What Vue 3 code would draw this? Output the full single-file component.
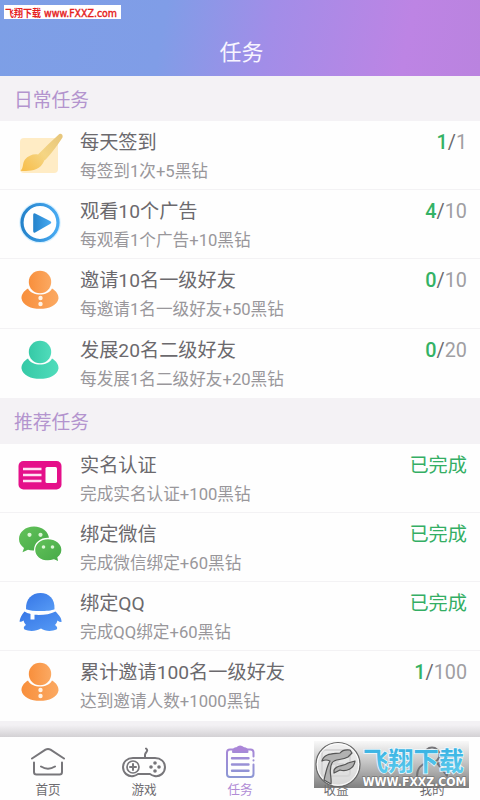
<script setup>
const sections = [
  {
    title: '日常任务',
    tasks: [
      { icon: 'brush', title: '每天签到', detail: '每签到1次+5黑钻', now: 1, total: 1 },
      { icon: 'play', title: '观看10个广告', detail: '每观看1个广告+10黑钻', now: 4, total: 10 },
      { icon: 'orange', title: '邀请10名一级好友', detail: '每邀请1名一级好友+50黑钻', now: 0, total: 10 },
      { icon: 'teal', title: '发展20名二级好友', detail: '每发展1名二级好友+20黑钻', now: 0, total: 20 }
    ]
  },
  {
    title: '推荐任务',
    tasks: [
      { icon: 'card', title: '实名认证', detail: '完成实名认证+100黑钻', done: true },
      { icon: 'wechat', title: '绑定微信', detail: '完成微信绑定+60黑钻', done: true },
      { icon: 'qq', title: '绑定QQ', detail: '完成QQ绑定+60黑钻', done: true },
      { icon: 'orange', title: '累计邀请100名一级好友', detail: '达到邀请人数+1000黑钻', now: 1, total: 100 }
    ]
  }
]
const tabs = [
  { id: 'home', label: '首页' },
  { id: 'game', label: '游戏' },
  { id: 'task', label: '任务' },
  { id: 'income', label: '收益' },
  { id: 'me', label: '我的' }
]
</script>

<template>
  <div class="screen">
    <svg class="defs" width="0" height="0">
      <defs>
        <linearGradient id="gOrange"><stop offset="0" stop-color="#f88f3c" /><stop offset="1" stop-color="#fba962" /></linearGradient>
        <linearGradient id="gTeal"><stop offset="0" stop-color="#35c9a6" /><stop offset="1" stop-color="#50dcbb" /></linearGradient>
        <linearGradient id="gBlue"><stop offset="0" stop-color="#2583cb" /><stop offset="1" stop-color="#47aaf2" /></linearGradient>
        <linearGradient id="gQQ" x2="1" y2="1"><stop offset="0" stop-color="#3676e6" /><stop offset="1" stop-color="#579bf5" /></linearGradient>
        <linearGradient id="gGreen" x2="1" y2="1"><stop offset="0" stop-color="#63c25a" /><stop offset="1" stop-color="#45a947" /></linearGradient>
        <linearGradient id="gBrush" gradientUnits="userSpaceOnUse" x1="46" y1="5" x2="6" y2="42"><stop offset="0" stop-color="#e6c67c" /><stop offset=".5" stop-color="#f5d583" /><stop offset="1" stop-color="#f8bd48" /></linearGradient>
        <linearGradient id="gTask" gradientUnits="userSpaceOnUse" x1="0" y1="0" x2="0" y2="36"><stop offset="0" stop-color="#ad85d8" /><stop offset="1" stop-color="#8998d4" /></linearGradient>
      </defs>
    </svg>

    <header class="header"><h1>任务</h1></header>

    <section v-for="s in sections" :key="s.title">
      <h2>{{ s.title }}</h2>
      <div v-for="t in s.tasks" :key="t.title" class="row">
        <svg class="icon" width="48" height="48" viewBox="0 0 48 48">
          <g v-if="t.icon === 'brush'">
            <rect x="4" y="9" width="38" height="35" rx="4" fill="#ffecc5" />
            <path d="M42.5 5.8C44 3.600 47.600 5.400 46.500 8.400C41 17 34 26 28.500 31.500L22 25.500C28 19.500 36 11.500 42.500 5.800Z" fill="url(#gBrush)" />
            <path d="M22 25.500Q27.500 27.500 28.200 31.800C24 42.500 12 42.500 4.500 41.700C8 38.500 6 34.500 9 30.500C12 26.500 18 24.500 22 25.500Z" fill="url(#gBrush)" />
          </g>
          <g v-else-if="t.icon === 'play'">
            <circle cx="24" cy="24.500" r="18" fill="#fff" stroke="#d9f1ff" stroke-width="5.500" />
            <circle cx="24" cy="24.500" r="18" fill="#fff" stroke="url(#gBlue)" stroke-width="3.200" />
            <path d="M17.200 17Q17.200 14.500 19.200 15.500L34 23Q36.500 24.500 34 26L19.200 34.500Q17.200 35.500 17.200 33Z" fill="url(#gBlue)" />
          </g>
          <g v-else-if="t.icon === 'orange' || t.icon === 'teal'" :fill="t.icon === 'teal' ? 'url(#gTeal)' : 'url(#gOrange)'">
            <circle cx="24" cy="15" r="11.200" />
            <path d="M12 21.500C16 29.500 32 29.500 36 21.500C40.500 24 42.800 28 42.500 31.500C41.300 38.500 33 41.800 24 41.800S6.700 38.500 5.500 31.500C5.200 28 7.500 24 12 21.500Z" />
            <g v-if="t.icon === 'orange'" fill="#fff3e6"><circle cx="24.500" cy="31" r="2.200" /><circle cx="24.500" cy="37" r="2.200" /></g>
          </g>
          <g v-else-if="t.icon === 'card'">
            <rect x="2.500" y="9" width="43" height="28.500" rx="5" fill="#e5108a" />
            <path d="M7 17H25.500M7 23H25.500M7 29H25.500" stroke="#ffe0f2" stroke-width="2.400" />
            <rect x="29.500" y="15" width="11.500" height="16" rx="1.500" fill="#fff" />
          </g>
          <g v-else-if="t.icon === 'wechat'">
            <path d="M18 5.500C9.500 5.500 3 11 3 18C3 22 4.800 24.500 8 27L6.500 31.200L12 28.800C14 29.500 16 29.800 19 29.500L33 18C33 10.500 26 5.500 18 5.500Z" fill="url(#gGreen)" />
            <path d="M32 17.500C24.500 17.500 18.600 22.500 18.600 29S24.500 40 32 40C34 40 36 39.600 38 38.900L43 41L42 36.500C44.500 34.500 46 32 46 29C46 22.500 39.500 17.500 32 17.500Z" fill="url(#gGreen)" stroke="#fff" stroke-width="1.300" />
            <g fill="#dcf6d6"><circle cx="13.500" cy="13.800" r="2.100" /><circle cx="24.500" cy="13.800" r="2.100" /><circle cx="27.500" cy="26" r="1.800" /><circle cx="36.500" cy="26" r="1.800" /></g>
          </g>
          <g v-else fill="url(#gQQ)">
            <path d="M10 19.200C9.500 9 16 3 24.500 3S39 9 38.500 19.200C33 21.700 16 21.700 10 19.200Z" />
            <path d="M8.500 21.500C11 23 13 23.500 14.500 24V29.500H18.500V24.800C26 25.300 34 24.500 39.500 21.500C43 25 46 28.500 45.500 32Q44 32.500 41.500 30.500Q41 33 39 35Q42.500 37.500 40.500 39.500C36 41.500 29 41.500 25 38.500C20 41.500 13 41.500 8.500 39.500Q6.500 37 10 35Q8 33 7.500 30.500Q5 32.500 3.500 31.500C4 28 5.500 25 8.500 21.500Z" />
          </g>
        </svg>
        <div class="text"><h3>{{ t.title }}</h3><p>{{ t.detail }}</p></div>
        <div v-if="t.done" class="status done">已完成</div>
        <div v-else class="status"><b>{{ t.now }}</b>/<span>{{ t.total }}</span></div>
      </div>
    </section>

    <div class="shade"></div>

    <nav class="tabs">
      <div v-for="t in tabs" :key="t.id" class="tab" :class="{ active: t.id === 'task' }">
        <svg width="44" height="36" viewBox="0 0 44 36" fill="none" stroke="#77767a" stroke-width="2" stroke-linecap="round" stroke-linejoin="round">
          <path v-if="t.id === 'home'" d="M6 14.500L19.500 5.700Q22 4.300 24.500 5.700L38 14.500M8 18.500V28Q8 30.500 10.500 30.500H33.500Q36 30.500 36 28V18.500M15 22.500Q22 27 29 22.500" />
          <g v-else-if="t.id === 'game'">
            <path d="M23 14V11Q23 9.500 24.500 8Q26 6 24 4.500M11 14H33C39 14 43 18 43 23C43 29 38 33 32.500 32Q30 31.500 28 30H16Q14 31.500 11.500 32C6 33 1 29 1 23C1 18 5 14 11 14Z" />
            <circle cx="11" cy="23" r="6" stroke-width="1.700" /><path d="M8 23H14M11 20V26" />
            <g fill="#77767a" stroke="none"><circle cx="33" cy="19" r="1.800" /><circle cx="33" cy="27" r="1.800" /><circle cx="29" cy="23" r="1.800" /><circle cx="37" cy="23" r="1.800" /></g>
          </g>
          <g v-else-if="t.id === 'task'" stroke="url(#gTask)">
            <path d="M15 5.500H12Q9 5.500 9 8.500V30Q9 33 12 33H32.500Q35.500 33 35.500 30V20.500M35.500 12.500V8.500Q35.500 5.500 32.500 5.500H29M35.500 16.300V16.600" />
            <path d="M15 8Q15 4.500 19 4Q22 1 25.500 4Q29.500 4.500 29.500 8Z" fill="#ad85d8" />
            <path d="M14 14.200H30.500M14 20.500H30.500M14 26.800H30.500" stroke-width="2.400" />
          </g>
          <g v-else-if="t.id === 'income'"><rect x="8" y="6" width="28" height="26" rx="3" /><path d="M16 13L22 19L28 13M15 20H29M22 19V28" /></g>
          <g v-else><circle cx="22" cy="11" r="7.500" /><path d="M7 32C7 24 12 20 17 19M27 19C33 20 37 24 37 32Z" /></g>
        </svg>
        <span>{{ t.label }}</span>
      </div>
    </nav>

    <svg class="mark-top" width="117" height="14" viewBox="0 0 117 14">
      <rect width="117" height="14" fill="#fff" />
      <text x="1" y="12" textLength="36" lengthAdjust="spacingAndGlyphs" class="red cn">飞翔下载</text>
      <text x="40" y="11.500" textLength="73" lengthAdjust="spacingAndGlyphs" class="red en">www.FXXZ.com</text>
    </svg>

    <svg class="mark-bottom" width="155" height="47" viewBox="0 0 155 47">
      <defs>
        <linearGradient id="gMark" x2="0" y2="1"><stop offset="0" stop-color="#777" stop-opacity=".04" /><stop offset=".4" stop-color="#777" stop-opacity=".38" /><stop offset="1" stop-color="#6c6c6c" stop-opacity=".87" /></linearGradient>
        <linearGradient id="gCyan" x2="0" y2="1"><stop offset="0" stop-color="#2fabe0" /><stop offset="1" stop-color="#62cfee" /></linearGradient>
      </defs>
      <rect width="155" height="47" fill="url(#gMark)" />
      <circle cx="24" cy="23.500" r="22" fill="#eee" fill-opacity=".8" stroke="#666" stroke-width="1.200" />
      <circle cx="24" cy="23.500" r="20.700" fill="none" stroke="#fff" />
      <g fill="#b2b2b2" stroke="#555" stroke-width="1.200" stroke-linejoin="round">
        <path d="M8 20C10 12 19 13 26 12Q29 8 36 9L38 12L34 16C27 20 21 17 18 22C14 29 18 35 17 43L10 39C12 31 13 25 16 20Q12 18 8 20Z" />
        <path d="M20 29C23 23 29 26 34 22L41 20C40 28 32 31 26 29L20 32Z" />
      </g>
      <text x="49" y="30" textLength="101" lengthAdjust="spacingAndGlyphs" class="brand">飞翔下载</text>
      <text x="48.500" y="44.500" textLength="104" lengthAdjust="spacingAndGlyphs" class="site">WWW.FXXZ.COM</text>
    </svg>
  </div>
</template>

<style>
body { margin: 0; overflow: hidden; }
</style>

<style scoped>
.screen { position: relative; width: 480px; height: 800px; display: flex; flex-direction: column; overflow: hidden; background: #f4f2f5; font-family: Roboto, "Noto Sans CJK SC", sans-serif; }
.defs { position: absolute; }
h1, h2, h3, p { margin: 0; font-weight: 400; }
.header { height: 76px; flex: none; box-sizing: border-box; padding-top: 37px; text-align: center; background: linear-gradient(100deg, #7d9fe6 0%, #809de7 34%, #a28de8 56%, #bd84e4 84%, #ba83df 100%); }
h1 { font-size: 22px; line-height: 32px; color: #f8f5ff; padding-left: 3px; }
h2 { height: 45px; line-height: 51px; padding-left: 14px; font-size: 18.800px; color: #b394ce; }
section + section h2 { height: 46px; line-height: 51px; }
.row { height: 69.200px; box-sizing: border-box; display: flex; padding: 8px 13px 0 16px; background: #fefefe; border-bottom: 1px solid #f3f2f4; }
.row:last-child { border-bottom: 0; }
.icon { flex: none; }
.text { flex: 1; padding-left: 16px; white-space: nowrap; }
h3 { font-size: 19.200px; line-height: 27px; color: #6b696d; }
p { font-size: 16.650px; line-height: 24px; margin-top: 4px; color: #99979b; }
.status { font-size: 19.800px; line-height: 27px; color: #6b696d; }
.status b { font-weight: 500; color: #34b265; }
.status span { color: #a09ea2; }
.status.done { font-size: 19.200px; color: #34ae64; }
.shade { flex: 1; background: linear-gradient(#f3f1f4 25%, #d3d1d4); }
.tabs { height: 63px; flex: none; display: flex; background: #fefefe; }
.tab { flex: 1; display: flex; flex-direction: column; align-items: center; padding-top: 7px; color: #6e6c70; font-size: 12.600px; line-height: 20px; }
.tab svg { flex: none; }
.tab.active { color: #b18cd6; }
.mark-top { position: absolute; left: 4px; top: 5px; }
.mark-bottom { position: absolute; left: 314px; top: 741px; }
.red { fill: #e5201c; }
.cn { font-family: "Noto Sans CJK SC", sans-serif; font-size: 10px; font-weight: 700; }
.en { font-family: "DejaVu Sans", sans-serif; font-size: 9.800px; font-weight: 400; stroke: #e5201c; stroke-width: .4px; }
.brand { font-family: "Noto Sans CJK SC", sans-serif; font-size: 26px; font-weight: 700; fill: url(#gCyan); stroke: #eefaff; stroke-width: 1.500px; paint-order: stroke; }
.site { font-family: "DejaVu Sans", sans-serif; font-size: 11.500px; font-weight: 700; fill: #fff; stroke: #777; stroke-width: 1.300px; paint-order: stroke; }
</style>
